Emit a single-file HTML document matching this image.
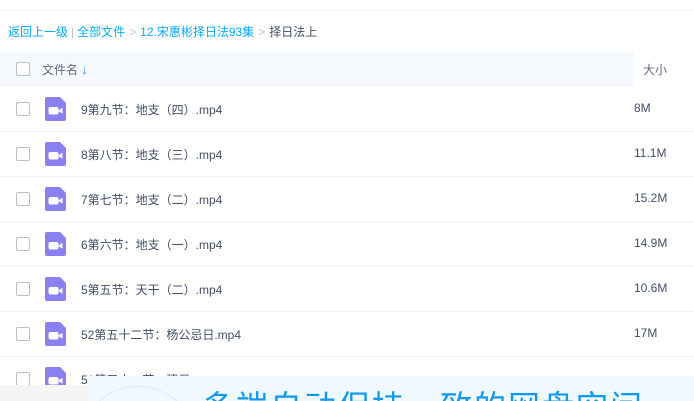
<!DOCTYPE html>
<html><head><meta charset="utf-8"><style>
*{margin:0;padding:0;box-sizing:border-box}
html,body{width:694px;height:401px;overflow:hidden}
body{background:#fff;font-family:"Liberation Sans","Noto Sans CJK SC",sans-serif;position:relative;font-size:12px;color:#424e67}
.top{position:absolute;left:0;top:10px;width:694px;height:1px;background:#f2f4f7}
.bc{position:absolute;left:8px;top:23px;font-size:12px;color:#09aaff;white-space:nowrap}
.bc .g{color:#c0c4cc;margin:0 4px}
.bc .c{color:#424e67}
.hd{position:absolute;left:0;top:51px;width:634px;height:36px;background:#f5f8fd}
.cb{position:absolute;left:16px;width:14px;height:14px;border:1px solid #b8c0cc;border-radius:2px;background:#fff}
.txt{position:absolute;white-space:nowrap}
.row{position:absolute;left:0;width:694px;height:45px;border-bottom:1px solid #f1f3f7}
.icon{position:absolute;left:45px;top:10px;width:21px;height:24px}
</style></head><body>
<div class="top"></div>
<div class="bc">返回上一级<span class="g" style="margin:0 3px">|</span>全部文件<span class="g">&gt;</span>12.宋惠彬择日法93集<span class="g">&gt;</span><span class="c">择日法上</span></div>
<div class="hd"><div class="cb" style="top:11px"></div><div class="txt" style="left:42px;top:10px;color:#636d7e">文件名 <span style="color:#3b8cff;font-weight:bold;font-size:13px">↓</span></div></div>
<div class="txt" style="left:643px;top:61px;color:#636d7e">大小</div>

<div class="row" style="top:87px"><div class="cb" style="top:15px"></div><svg class="icon" viewBox="0 0 21 24"><path d="M2 0H15L21 6V22a2 2 0 0 1-2 2H2a2 2 0 0 1-2-2V2a2 2 0 0 1 2-2z" fill="#8a80f2"/><rect x="3.5" y="10" width="10" height="7.5" rx="2" fill="#fff"/><path d="M13 13.7l4.5-3v6z" fill="#fff"/></svg><div class="txt" style="left:81px;top:14px">9第九节：地支（四）.mp4</div><div class="txt" style="left:634px;top:14px">8M</div></div>
<div class="row" style="top:132px"><div class="cb" style="top:15px"></div><svg class="icon" viewBox="0 0 21 24"><path d="M2 0H15L21 6V22a2 2 0 0 1-2 2H2a2 2 0 0 1-2-2V2a2 2 0 0 1 2-2z" fill="#8a80f2"/><rect x="3.5" y="10" width="10" height="7.5" rx="2" fill="#fff"/><path d="M13 13.7l4.5-3v6z" fill="#fff"/></svg><div class="txt" style="left:81px;top:14px">8第八节：地支（三）.mp4</div><div class="txt" style="left:634px;top:14px">11.1M</div></div>
<div class="row" style="top:177px"><div class="cb" style="top:15px"></div><svg class="icon" viewBox="0 0 21 24"><path d="M2 0H15L21 6V22a2 2 0 0 1-2 2H2a2 2 0 0 1-2-2V2a2 2 0 0 1 2-2z" fill="#8a80f2"/><rect x="3.5" y="10" width="10" height="7.5" rx="2" fill="#fff"/><path d="M13 13.7l4.5-3v6z" fill="#fff"/></svg><div class="txt" style="left:81px;top:14px">7第七节：地支（二）.mp4</div><div class="txt" style="left:634px;top:14px">15.2M</div></div>
<div class="row" style="top:222px"><div class="cb" style="top:15px"></div><svg class="icon" viewBox="0 0 21 24"><path d="M2 0H15L21 6V22a2 2 0 0 1-2 2H2a2 2 0 0 1-2-2V2a2 2 0 0 1 2-2z" fill="#8a80f2"/><rect x="3.5" y="10" width="10" height="7.5" rx="2" fill="#fff"/><path d="M13 13.7l4.5-3v6z" fill="#fff"/></svg><div class="txt" style="left:81px;top:14px">6第六节：地支（一）.mp4</div><div class="txt" style="left:634px;top:14px">14.9M</div></div>
<div class="row" style="top:267px"><div class="cb" style="top:15px"></div><svg class="icon" viewBox="0 0 21 24"><path d="M2 0H15L21 6V22a2 2 0 0 1-2 2H2a2 2 0 0 1-2-2V2a2 2 0 0 1 2-2z" fill="#8a80f2"/><rect x="3.5" y="10" width="10" height="7.5" rx="2" fill="#fff"/><path d="M13 13.7l4.5-3v6z" fill="#fff"/></svg><div class="txt" style="left:81px;top:14px">5第五节：天干（二）.mp4</div><div class="txt" style="left:634px;top:14px">10.6M</div></div>
<div class="row" style="top:312px"><div class="cb" style="top:15px"></div><svg class="icon" viewBox="0 0 21 24"><path d="M2 0H15L21 6V22a2 2 0 0 1-2 2H2a2 2 0 0 1-2-2V2a2 2 0 0 1 2-2z" fill="#8a80f2"/><rect x="3.5" y="10" width="10" height="7.5" rx="2" fill="#fff"/><path d="M13 13.7l4.5-3v6z" fill="#fff"/></svg><div class="txt" style="left:81px;top:14px">52第五十二节：杨公忌日.mp4</div><div class="txt" style="left:634px;top:14px">17M</div></div>
<div class="row" style="top:357px;height:44px;border:none;overflow:hidden"><div class="cb" style="top:15px"></div><svg class="icon" viewBox="0 0 21 24"><path d="M2 0H15L21 6V22a2 2 0 0 1-2 2H2a2 2 0 0 1-2-2V2a2 2 0 0 1 2-2z" fill="#8a80f2"/><rect x="3.5" y="10" width="10" height="7.5" rx="2" fill="#fff"/><path d="M13 13.7l4.5-3v6z" fill="#fff"/></svg><div class="txt" style="left:81px;top:14px">51第五十一节：建日</div></div>

<div style="position:absolute;left:0;top:385px;width:88px;height:16px;background:#f5f5f5"></div>
<div style="position:absolute;left:88px;top:376px;width:606px;height:25px;background:#eff9fe;overflow:hidden">
<div style="position:absolute;left:-10px;top:10px;width:120px;height:120px;border:1px solid #d8eef9;border-radius:50%"></div>
<div style="position:absolute;left:114px;top:6px;font-size:32px;color:#0e98ee;white-space:nowrap;letter-spacing:2px">多端自动保持一致的网盘空间</div>
</div>
</body></html>
